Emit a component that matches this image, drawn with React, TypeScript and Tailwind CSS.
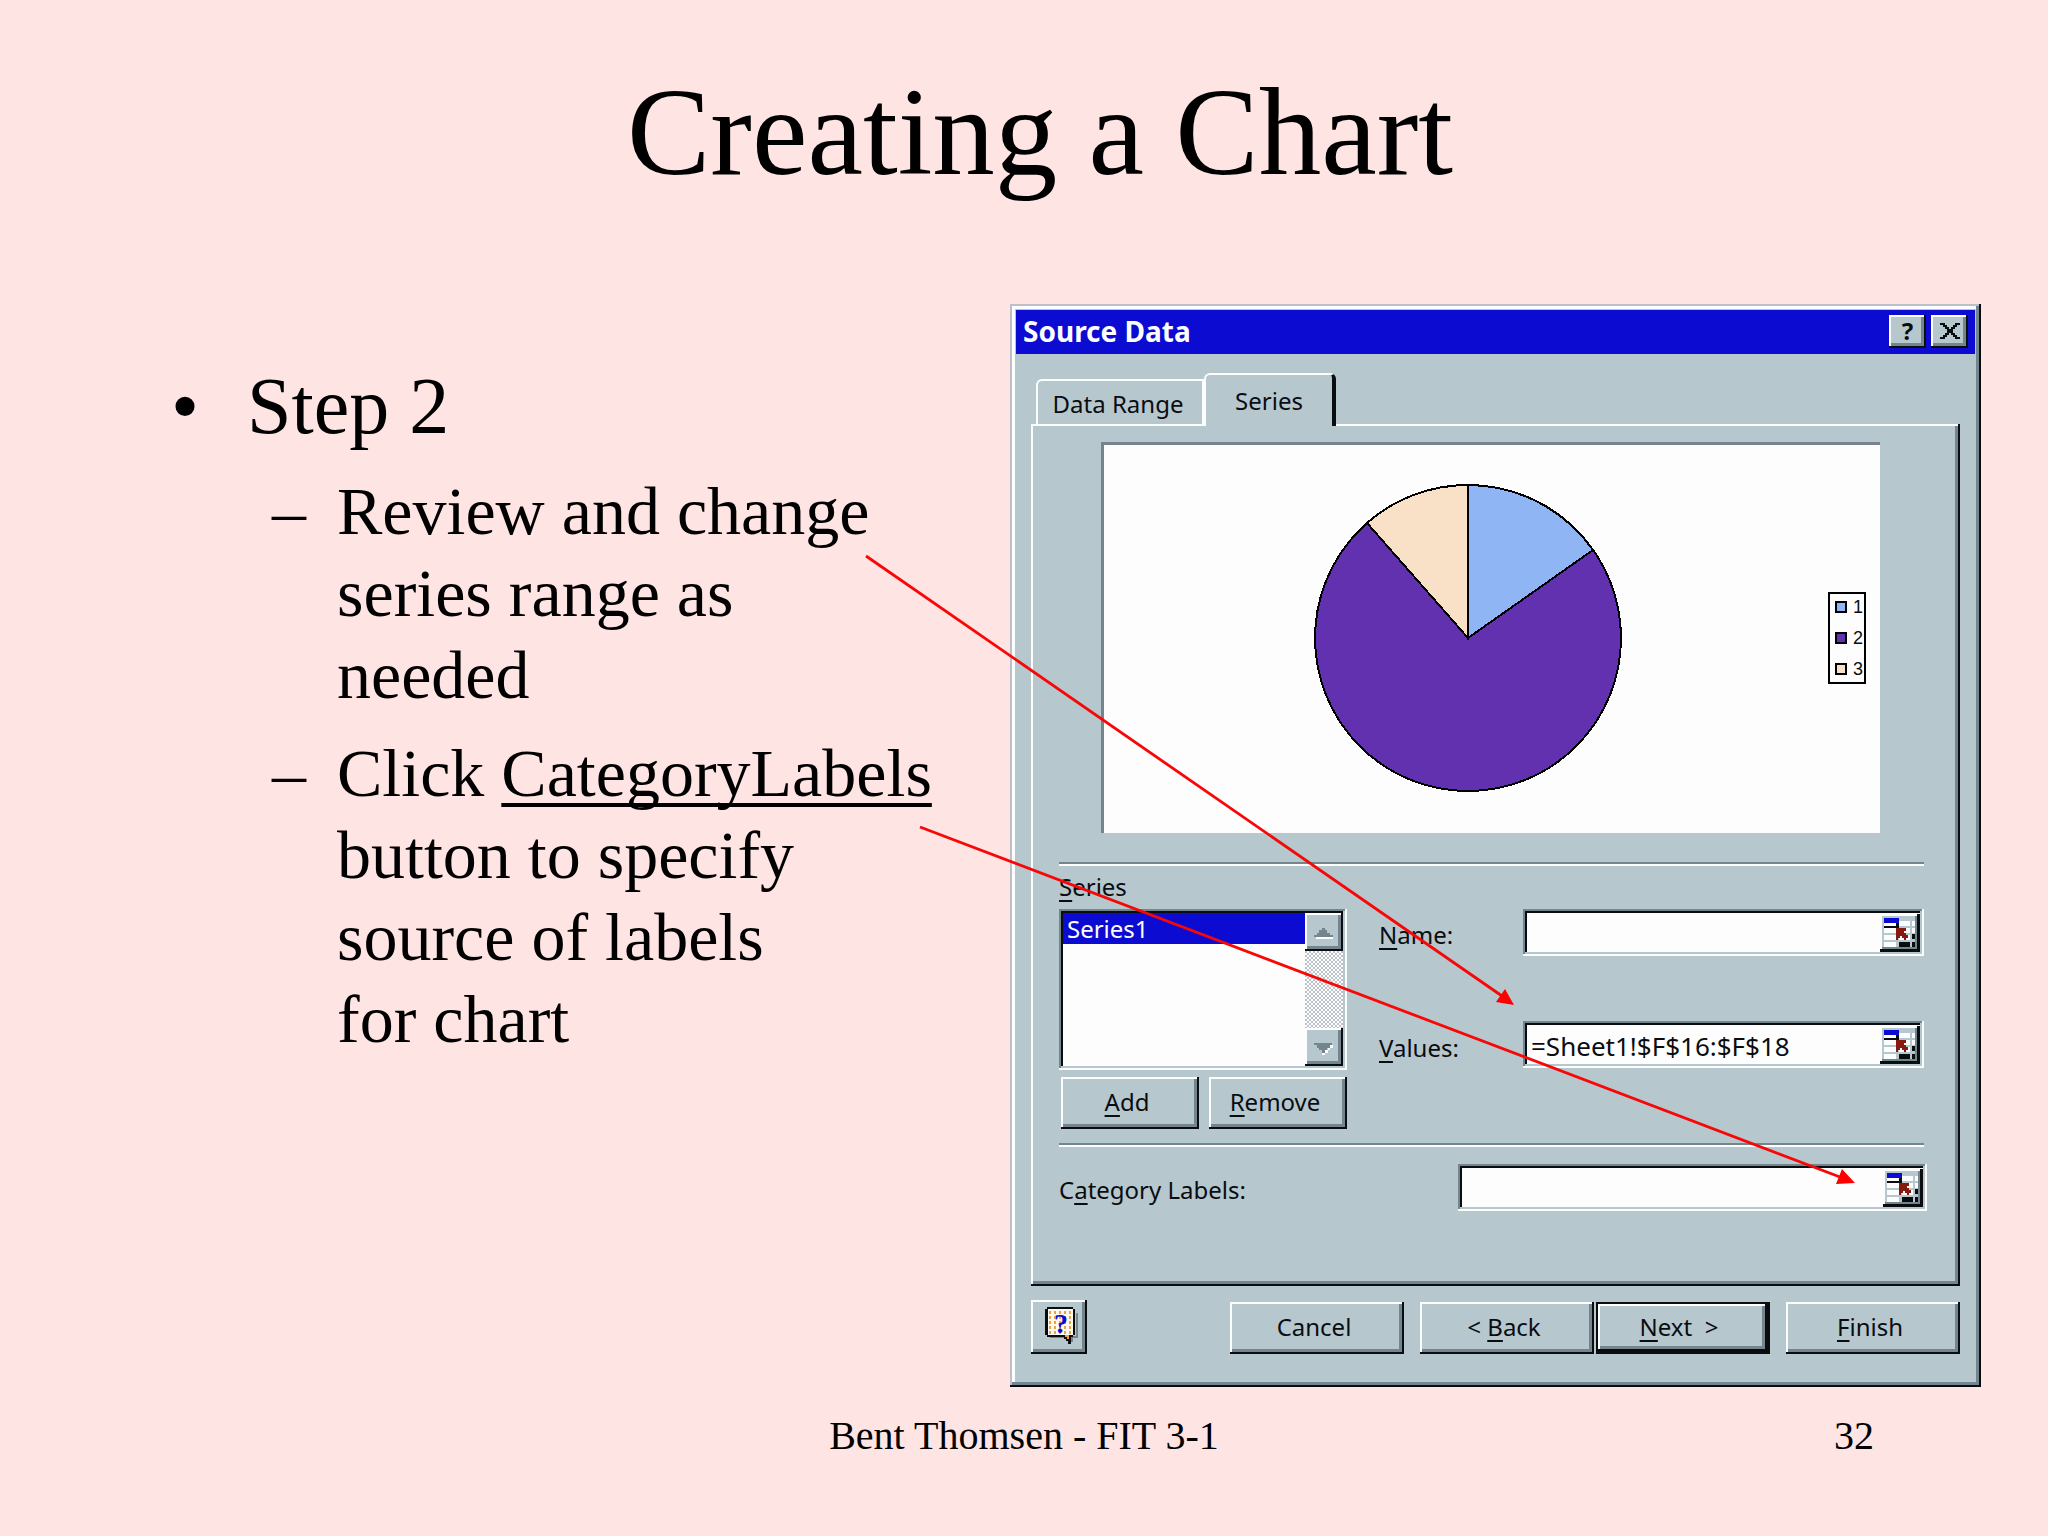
import React, { ReactNode, useState } from 'react';

const RAISED = 'shadow-[inset_-2px_-2px_0_#0a0d10,inset_2px_2px_0_#fcfdfe,inset_-5px_-5px_0_#74858e]';
const SUNKEN = 'shadow-[inset_-2px_-2px_0_#fcfdfe,inset_2px_2px_0_#74858e,inset_-4px_-4px_0_#b7c7ce,inset_4px_4px_0_#0a0d10]';

/* Underlined access key inside a caption */
function Key({ children }: { children: ReactNode }) {
  return <span className="underline decoration-2 underline-offset-4">{children}</span>;
}

function DialogButton({ children, isDefault = false }: { children: ReactNode; isDefault?: boolean }) {
  if (isDefault) {
    return (
      <button className="h-[52px] w-[174px] border-2 border-[#0a0d10] pr-2 pb-0.5 shadow-[inset_-3px_-3px_0_#0a0d10,inset_2px_2px_0_#fcfdfe,inset_-6px_-6px_0_#74858e]">
        {children}
      </button>
    );
  }
  return <button className={`h-[52px] w-[174px] pr-1.5 pb-0.5 ${RAISED}`}>{children}</button>;
}

function Rule() {
  return <div className="mr-[3px] h-1 border-t-2 border-b-2 border-t-[#74858e] border-b-[#fcfdfe]" />;
}

function RangeIcon() {
  return (
    <svg viewBox="0 0 40 38" className="h-[38px] w-10" shapeRendering="crispEdges">
      <rect width="40" height="38" fill="#fdfdfd" />
      <rect x="2" y="2" width="35" height="34" fill="#b7c7ce" />
      <path d="M35 2h2v33H2v-2h33z" fill="#74858e" />
      <path d="M37 0h3v38H0v-3h37z" fill="#0a0d10" />
      {/* cells */}
      <path
        d="M4 9h12v3H4zM4 14h12v5H4zM4 21h12v5H4zM4 28h12v5H4zM19 7h11v5H19zM19 14h11v5H19zM19 21h11v5H19zM32 7h3v5h-3zM32 14h3v5h-3z"
        fill="#fdfdfd"
      />
      <rect x="4" y="4" width="15" height="5" fill="#0b0bd2" />
      <path d="M4 12h12V9h3v5H4z" fill="#0a0d10" />
      <path d="M19 28h11v5H19zM32 20h3v5h-3zM32 28h3v5h-3z" fill="#0a0d10" />
      <path d="M16 14h10v3h-2v2h2v2h2v3h-2v2h-2v-2h-2v-2h-2v2h-2v2h-2z" fill="#861a10" />
    </svg>
  );
}

function HelpIcon() {
  const dots: ReactNode[] = [];
  for (let x = 18; x < 41; x += 5) {
    for (let y = 11; y < 34; y += 5) {
      dots.push(<rect key={`${x}-${y}`} x={x} y={y} width="2" height="3" fill="#eba346" />);
    }
  }
  return (
    <svg viewBox="0 0 56 54" className="h-[54px] w-14" shapeRendering="crispEdges">
      <path d="M45 13h2v25h-5v4h-2v-4H19v-2h26z" fill="#74858e" />
      <path d="M16 7h26v2h2v26h-2v2h-2v7h-3v-3h-2v-2h-2v-2H16v-2h-2V9h2z" fill="#0a0d10" />
      <path d="M17 9h25v26H17z" fill="#fdf9ee" />
      <path d="M34 35h4v4h-2v-2h-2z" fill="#eba346" />
      {dots}
      <text x="30" y="33" textAnchor="middle" fontSize="28" fontWeight="700" fontFamily="'Liberation Serif', serif" fill="#0b0bd2">
        ?
      </text>
    </svg>
  );
}

function RangeField({ id, value, onChange, className }: {
  id: string;
  value: string;
  onChange: (value: string) => void;
  className: string;
}) {
  return (
    <div className={`flex h-[47px] bg-[#fdfdfd] p-1 ${SUNKEN} ${className}`}>
      <input
        id={id}
        type="text"
        value={value}
        onChange={(e) => onChange(e.target.value)}
        className="min-w-0 flex-1 bg-transparent pt-0.5 pl-1 text-[26px] leading-8 outline-none"
      />
      <button aria-label="Collapse dialog">
        <RangeIcon />
      </button>
    </div>
  );
}

function PieChart() {
  return (
    <svg viewBox="0 0 310 310" className="size-[310px]" shapeRendering="crispEdges" stroke="#000" strokeWidth="2">
      <circle cx="155" cy="155" r="153" fill="#6231b0" />
      <path d="M155 155V2A153 153 0 0 1 280 67Z" fill="#8fb5f4" />
      <path d="M155 155L54 40A153 153 0 0 1 155 2Z" fill="#f8e1c6" />
    </svg>
  );
}

function Legend() {
  return (
    <ul className="flex h-[92px] w-[38px] flex-col justify-between overflow-hidden border-2 border-black py-[3px] pl-[5px] font-['Liberation_Sans',sans-serif] text-lg leading-5">
      <li className="flex items-center gap-1.5">
        <span className="size-3 shrink-0 border-2 border-black bg-[#8fb5f4]" />1
      </li>
      <li className="flex items-center gap-1.5">
        <span className="size-3 shrink-0 border-2 border-black bg-[#6231b0]" />2
      </li>
      <li className="flex items-center gap-1.5">
        <span className="size-3 shrink-0 border-2 border-black bg-[#f8e1c6]" />3
      </li>
    </ul>
  );
}

function SeriesList() {
  return (
    <div className={`flex h-[161px] bg-[#fdfdfd] p-1 ${SUNKEN}`}>
      <ul role="listbox" aria-labelledby="series-label" className="flex-1">
        <li role="option" aria-selected="true" className="h-[31px] bg-[#0b0bd2] pl-1 leading-8 text-[#fdfdfd]">
          Series1
        </li>
      </ul>
      <div className="flex w-[38px] flex-col justify-between bg-[#fdfdfd] bg-[repeating-conic-gradient(#bcc3cb_0_25%,#fdfdfd_0_50%)] bg-[length:4px_4px]">
        <button aria-label="Scroll up" className={`h-[38px] bg-[#b7c7ce] ${RAISED}`}>
          <svg viewBox="0 0 38 38" shapeRendering="crispEdges">
            <path d="M17 15h3v2h2v3h3v2h3v2H9v-2h3v-2h2v-3h3z" fill="#74858e" />
            <rect x="11" y="24" width="17" height="2" fill="#fcfdfe" />
          </svg>
        </button>
        <button aria-label="Scroll down" className={`h-[38px] bg-[#b7c7ce] ${RAISED}`}>
          <svg viewBox="0 0 38 38" shapeRendering="crispEdges">
            <path d="M28 17v3h-3v2h-2v3h-3v2h-3v-3h3v-2h3v-2h2v-3z" fill="#fcfdfe" />
            <path d="M9 15h18v2h-2v3h-3v2h-2v3h-3v-3h-3v-2h-2v-3H9z" fill="#74858e" />
          </svg>
        </button>
      </div>
    </div>
  );
}

function SourceDataDialog() {
  const [name, setName] = useState('');
  const [values, setValues] = useState('=Sheet1!$F$16:$F$18');
  const [labels, setLabels] = useState('');

  return (
    <section
      aria-label="Source Data"
      className="w-[971px] bg-[#b7c7ce] p-1.5 pb-[33px] font-['Noto_Sans',sans-serif] text-2xl leading-8 text-[#0a0d10] shadow-[inset_-2px_-2px_0_#0a0d10,inset_2px_2px_0_#bcc0cb,inset_-5px_-5px_0_#74858e,inset_5px_5px_0_#fcfdfe]"
    >
      {/* Title bar */}
      <div className="flex h-11 items-center gap-[5px] bg-[#0b0bd2] pr-[7px] pb-0.5 pl-[7px]">
        <h2 className="flex-1 text-[28px] font-bold text-[#fdfdfd]">Source Data</h2>
        <button aria-label="Help" className={`h-[33px] w-[37px] bg-[#b7c7ce] font-bold ${RAISED}`}>
          ?
        </button>
        <button aria-label="Close" className={`h-[33px] w-[37px] bg-[#b7c7ce] ${RAISED}`}>
          <svg viewBox="0 0 37 33" shapeRendering="crispEdges">
            <path
              d="M9 8h5v2h2v2h2v2h2v-2h2v-2h2V8h5v2h-3v2h-2v2h-2v4h2v2h2v2h3v2h-5v-2h-2v-2h-2v-2h-2v2h-2v2h-2v2H9v-2h3v-2h2v-2h2v-4h-2v-2h-2v-2H9z"
              fill="#0a0d10"
            />
          </svg>
        </button>
      </div>

      <div className="px-[15px] pt-[19px]">
        {/* Tabs */}
        <div role="tablist" className="flex items-end pl-[5px]">
          <button
            role="tab"
            aria-selected="false"
            className="h-[45px] w-[168px] rounded-tl-md border-2 border-b-0 border-[#fcfdfe] pt-0.5 pr-1"
          >
            Data Range
          </button>
          <button
            role="tab"
            aria-selected="true"
            className="relative -mb-0.5 h-[53px] w-[132px] rounded-t-md border-t-2 border-r-4 border-l-2 border-t-[#fcfdfe] border-r-[#0a0d10] border-l-[#fcfdfe] bg-[#b7c7ce]"
          >
            Series
          </button>
        </div>

        {/* Series page */}
        <div className={`h-[862px] pt-[18px] pr-[33px] pl-7 ${RAISED}`}>
          <div className="mr-[47px] ml-[42px] flex h-[391px] items-center justify-between border-t-3 border-l-3 border-[#74858e] bg-[#fdfdfd] pr-[14px] pb-[3px] pl-[209px]">
            <PieChart />
            <Legend />
          </div>

          <div className="pt-[29px]">
            <Rule />
          </div>

          <div className="mr-[3px] flex gap-8 pb-[14px]">
            <div className="w-72 pt-[5px]">
              <div id="series-label">
                <Key>S</Key>eries
              </div>
              <div className="pt-1.5">
                <SeriesList />
              </div>
              <div className="grid grid-cols-2 gap-[10px] pt-[7px] pl-0.5">
                <button className={`h-[52px] pr-1.5 pb-0.5 ${RAISED}`}>
                  <Key>A</Key>dd
                </button>
                <button className={`h-[52px] pr-1.5 pb-0.5 ${RAISED}`}>
                  <Key>R</Key>emove
                </button>
              </div>
            </div>

            <div className="flex flex-1 flex-col gap-[65px] pt-[43px]">
              <div className="flex items-center justify-between">
                <label htmlFor="series-name" className="pt-1">
                  <Key>N</Key>ame:
                </label>
                <RangeField id="series-name" value={name} onChange={setName} className="w-[401px]" />
              </div>
              <div className="flex items-center justify-between">
                <label htmlFor="series-values" className="pt-1.5">
                  <Key>V</Key>alues:
                </label>
                <RangeField id="series-values" value={values} onChange={setValues} className="w-[401px]" />
              </div>
            </div>
          </div>

          <Rule />

          <div className="flex items-center justify-between pt-[17px]">
            <label htmlFor="category-labels" className="pt-1">
              C<Key>a</Key>tegory Labels:
            </label>
            <RangeField id="category-labels" value={labels} onChange={setLabels} className="w-[469px]" />
          </div>
        </div>

        {/* Wizard buttons */}
        <div className="flex items-end pt-[14px]">
          <button aria-label="Office Assistant" className={`mr-auto h-[54px] w-14 ${RAISED}`}>
            <HelpIcon />
          </button>
          <DialogButton>Cancel</DialogButton>
          <div className="mx-4 flex gap-0.5">
            <DialogButton>
              &lt; <Key>B</Key>ack
            </DialogButton>
            <DialogButton isDefault>
              <Key>N</Key>ext &nbsp;&gt;
            </DialogButton>
          </div>
          <DialogButton>
            <Key>F</Key>inish
          </DialogButton>
        </div>
      </div>
    </section>
  );
}

/* Callout arrows from the bullet text to the dialog fields */
function Callouts() {
  return (
    <svg
      viewBox="0 0 2048 1536"
      className="pointer-events-none absolute top-0 left-0 h-[1536px] w-[2048px]"
      stroke="#f90606"
      strokeWidth="2.8"
      fill="none"
    >
      <path d="M866 556L1502 996" />
      <path d="M1514 1005L1496 1002L1505 989Z" fill="#ff0000" stroke="none" />
      <path d="M920 827L1840 1177" />
      <path d="M1855 1183L1836 1184L1842 1169Z" fill="#ff0000" stroke="none" />
    </svg>
  );
}

export default function App() {
  return (
    <main className="relative min-h-screen bg-[#ffe4e4] font-['Liberation_Serif',serif] text-black">
      <h1 className="pt-[57px] pl-8 text-center text-[125px] leading-[150px]">Creating a Chart</h1>

      <div className="flex items-start justify-between pt-[97px] pr-[67px] pl-[171px]">
        <ul className="pt-[54px]">
          <li className="flex text-[80px] leading-[96px]">
            <span className="w-[76px]">•</span>
            Step 2
          </li>
          <li className="flex pt-4 pl-[101px] text-[68px] leading-[82px]">
            <span className="w-[65px]">–</span>
            <p>
              Review and change
              <br />
              series range as
              <br />
              needed
            </p>
          </li>
          <li className="flex pt-4 pl-[101px] text-[68px] leading-[82px]">
            <span className="w-[65px]">–</span>
            <p>
              Click{' '}
              <span className="underline decoration-4 underline-offset-7 [text-decoration-skip-ink:none]">
                CategoryLabels
              </span>
              <br />
              button to specify
              <br />
              source of labels
              <br />
              for chart
            </p>
          </li>
        </ul>

        <SourceDataDialog />
      </div>

      <footer className="grid grid-cols-3 px-[174px] pt-[25px] text-[40px] leading-[48px]">
        <span className="col-start-2 text-center">Bent Thomsen - FIT 3-1</span>
        <span className="text-right">32</span>
      </footer>

      <Callouts />
    </main>
  );
}
